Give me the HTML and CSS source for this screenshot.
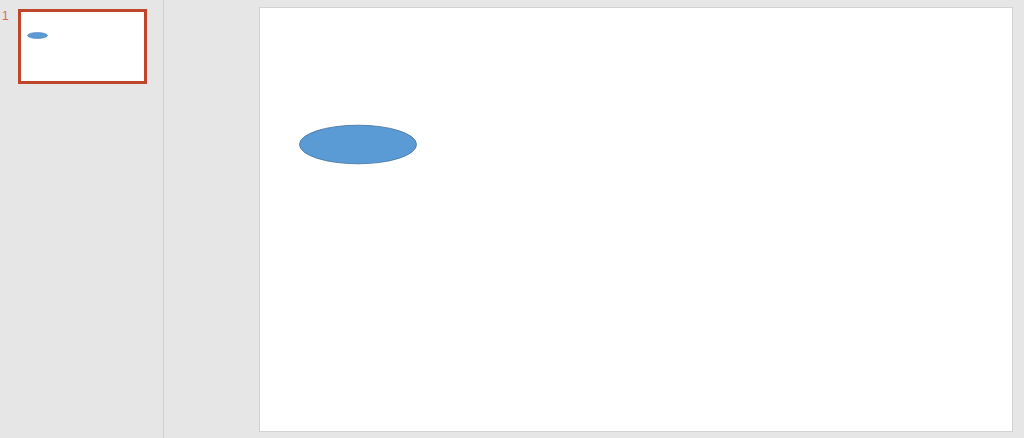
FILE: index.html
```html
<!DOCTYPE html>
<html>
<head>
<meta charset="utf-8">
<link rel="stylesheet" href="styles.css">
</head>
<body>
<div class="app">
  <aside class="sidebar">
    <div class="thumb-row">
      <span class="num">1</span>
      <div class="thumb">
        <svg class="thumb-shape" width="21" height="7" viewBox="0 0 21 7"><ellipse cx="10.5" cy="3.5" rx="10" ry="3" fill="#5b9bd5" stroke="#4a80b5" stroke-width="0.6"/></svg>
      </div>
    </div>
  </aside>
  <main class="stage">
    <div class="slide">
      <svg class="shape" width="120" height="41" viewBox="0 0 120 41"><ellipse cx="60" cy="20.5" rx="58.5" ry="19.3" fill="#5b9bd5" stroke="#41719c" stroke-width="0.8"/></svg>
    </div>
  </main>
</div>
</body>
</html>
```
FILE: styles.css
```css
html, body {
  margin: 0;
  padding: 0;
  background: #e6e6e6;
  font-family: "Liberation Sans", Arial, sans-serif;
}
.app {
  display: flex;
  width: 1024px;
  height: 438px;
  overflow: hidden;
}
.sidebar {
  width: 163px;
  flex: none;
  border-right: 1px solid #d0d0d0;
  box-sizing: content-box;
}
.thumb-row {
  display: flex;
  align-items: flex-start;
  padding: 9px 0 0 2px;
}
.num {
  width: 16px;
  font-size: 12px;
  line-height: 12px;
  color: #e0684c;
  padding-top: 1px;
}
.thumb {
  position: relative;
  width: 123px;
  height: 69px;
  background: #fff;
  border: 3px solid #c0462b;
}
.thumb-shape {
  position: absolute;
  left: 6px;
  top: 20px;
}
.stage {
  flex: 1;
  padding: 7px 0 0 95px;
}
.slide {
  position: relative;
  width: 752px;
  height: 423px;
  background: #fff;
  border: 1px solid #d2d2d2;
}
.shape {
  position: absolute;
  left: 38px;
  top: 116px;
}
```
